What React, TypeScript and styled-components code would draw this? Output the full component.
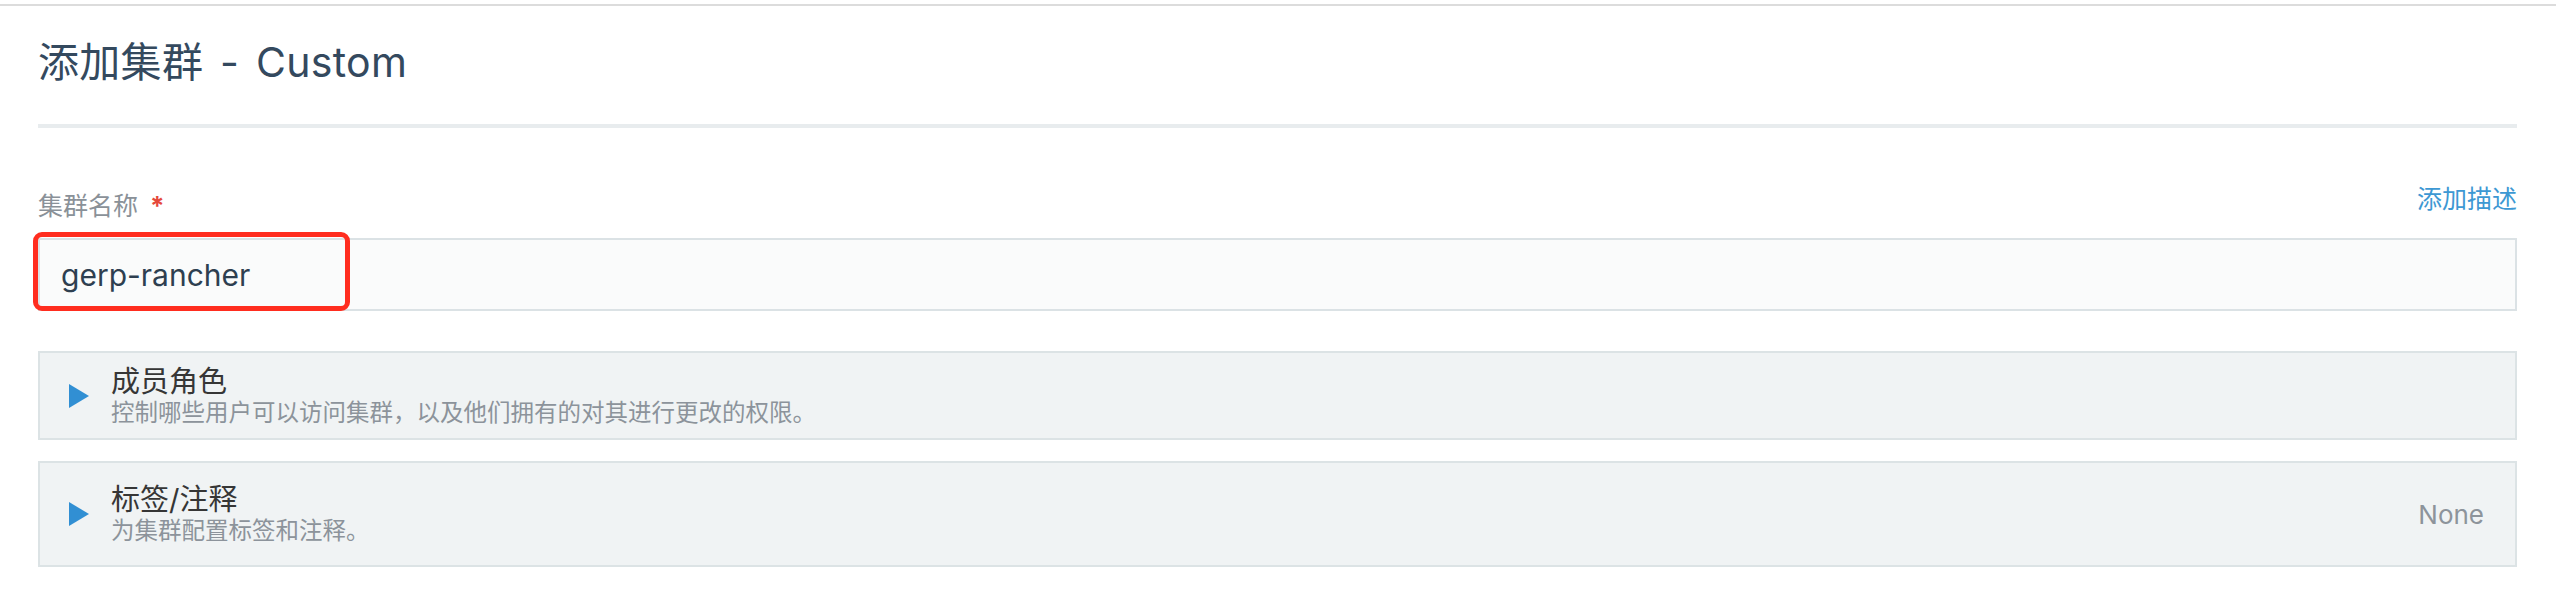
import React from "react";
import styled, { createGlobalStyle } from "styled-components";

const FONT = `"Inter", "Noto Sans CJK SC", sans-serif`;

const GlobalStyle = createGlobalStyle`
  html, body {
    margin: 0;
    padding: 0;
    background: #ffffff;
  }
  body {
    font-family: ${FONT};
    color: #2d3e50;
  }
  * { box-sizing: border-box; }
`;

const TopRule = styled.div`
  margin-top: 4px;
  height: 2px;
  background: #dcdcdc;
`;

const Page = styled.main`
  padding: 0 39px 0 38px;
`;

const Header = styled.header`
  padding: 31px 0 37px;
  border-bottom: 4px solid #e8ecee;
`;

const Title = styled.h1`
  margin: 0;
  font-size: 41px;
  line-height: 50px;
  font-weight: 400;
  word-spacing: 5px;
  letter-spacing: 0.3px;
  color: #34495e;
`;

const FormGroup = styled.section`
  margin-top: 56px;
`;

const LabelRow = styled.div`
  display: flex;
  justify-content: space-between;
  align-items: flex-end;
  margin-bottom: 17px;
`;

const Label = styled.label`
  font-size: 25px;
  line-height: 30px;
  color: #8a9198;
`;

const Required = styled.span`
  color: #e5483b;
  margin-left: 12px;
  font-size: 26px;
  font-weight: 700;
`;

const LinkButton = styled.a`
  font-size: 25px;
  line-height: 30px;
  color: #3d98d3;
  margin-bottom: 7px;
  cursor: pointer;
`;

const InputWrap = styled.div`
  position: relative;
`;

const TextInput = styled.input`
  display: block;
  width: 100%;
  height: 73px;
  border: 2px solid #dbe2e5;
  background: #fafbfb;
  padding: 0 21px;
  font-family: ${FONT};
  font-size: 30px;
  color: #2e3f50;
  outline: none;
`;

const Highlight = styled.div`
  position: absolute;
  left: -5px;
  top: -6px;
  width: 317px;
  height: 79px;
  border: 5px solid #ff2d1f;
  border-radius: 9px;
  pointer-events: none;
`;

const Accordions = styled.div`
  margin-top: 40px;
  display: flex;
  flex-direction: column;
  gap: 21px;
`;

const AccordionBox = styled.div<{ $height: number }>`
  display: flex;
  align-items: center;
  min-height: ${(p) => p.$height}px;
  border: 2px solid #dce3e5;
  background: #f0f3f4;
  padding: 0 31px 0 29px;
`;

const Caret = styled.svg`
  flex: none;
  width: 20px;
  height: 24px;
  margin-right: 22px;
`;

const AccText = styled.div`
  flex: 1;
  display: flex;
  flex-direction: column;
`;

const AccTitle = styled.div`
  font-size: 29px;
  line-height: 34px;
  color: #363636;
`;

const AccDesc = styled.div`
  font-size: 23.5px;
  line-height: 28px;
  color: #8c939b;
`;

const AccStatus = styled.div`
  font-size: 26px;
  color: #8d949b;
`;

type AccProps = { title: string; desc: string; status?: string; height: number };

const Accordion = ({ title, desc, status, height }: AccProps) => (
  <AccordionBox $height={height}>
    <Caret viewBox="0 0 20 24">
      <polygon points="0,0 20,12 0,24" fill="#318fd3" />
    </Caret>
    <AccText>
      <AccTitle>{title}</AccTitle>
      <AccDesc>{desc}</AccDesc>
    </AccText>
    {status && <AccStatus>{status}</AccStatus>}
  </AccordionBox>
);

export default function App() {
  return (
    <>
      <GlobalStyle />
      <TopRule />
      <Page>
        <Header>
          <Title>添加集群 - Custom</Title>
        </Header>
        <FormGroup>
          <LabelRow>
            <Label>
              集群名称<Required>*</Required>
            </Label>
            <LinkButton>添加描述</LinkButton>
          </LabelRow>
          <InputWrap>
            <TextInput defaultValue="gerp-rancher" />
            <Highlight />
          </InputWrap>
        </FormGroup>
        <Accordions>
          <Accordion
            height={89}
            title="成员角色"
            desc="控制哪些用户可以访问集群，以及他们拥有的对其进行更改的权限。"
          />
          <Accordion
            height={106}
            title="标签/注释"
            desc="为集群配置标签和注释。"
            status="None"
          />
        </Accordions>
      </Page>
    </>
  );
}
